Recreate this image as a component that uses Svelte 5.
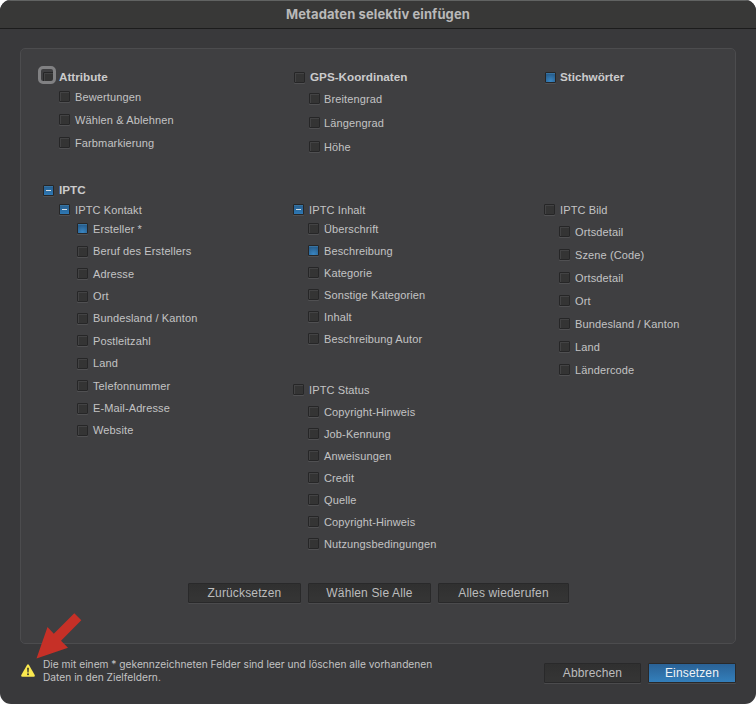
<script>
	/** state: "" | "on" | "mixed" */
	const attribute = { label: "Attribute", state: "", pitch: 23, gap: 0.5, tags: ["Bewertungen", "Wählen & Ablehnen", "Farbmarkierung"] };
	const gps = { label: "GPS-Koordinaten", state: "", pitch: 24, gap: 2, tags: ["Breitengrad", "Längengrad", "Höhe"] };
	const keywords = { label: "Stichwörter", state: "on", pitch: 23, gap: 0, tags: [] };

	const kontakt = {
		label: "IPTC Kontakt", state: "mixed", pitch: 22.4, gap: 0.2,
		tags: ["Ersteller *", "Beruf des Erstellers", "Adresse", "Ort", "Bundesland / Kanton", "Postleitzahl", "Land", "Telefonnummer", "E-Mail-Adresse", "Website"],
	};
	const inhalt = {
		label: "IPTC Inhalt", state: "mixed", pitch: 22, gap: 0,
		tags: ["Überschrift", "Beschreibung", "Kategorie", "Sonstige Kategorien", "Inhalt", "Beschreibung Autor"],
	};
	const status = {
		label: "IPTC Status", state: "", pitch: 22, gap: 3,
		tags: ["Copyright-Hinweis", "Job-Kennung", "Anweisungen", "Credit", "Quelle", "Copyright-Hinweis", "Nutzungsbedingungen"],
	};
	const bild = {
		label: "IPTC Bild", state: "", pitch: 23, gap: 2.5,
		tags: ["Ortsdetail", "Szene (Code)", "Ortsdetail", "Ort", "Bundesland / Kanton", "Land", "Ländercode"],
	};

	let selected = $state(["Ersteller *", "Beschreibung"]);

	function toggle(tag) {
		selected = selected.includes(tag) ? selected.filter(t => t !== tag) : [...selected, tag];
	}
</script>

{#snippet box(state, focus)}
	<span class="box {state}" class:focus></span>
{/snippet}

{#snippet group(g, cls)}
	<div class="group {cls}">
		<div class="head">{@render box(g.state, g.label === "Attribute")}<span class="label">{g.label}</span></div>
		<div class="items" style="--pitch: {g.pitch}px; --gap: {g.gap}px">
			{#each g.tags as tag}
				<button class="item" onclick={() => toggle(tag)}>
					{@render box(selected.includes(tag) ? "on" : "", false)}<span class="label">{tag}</span>
				</button>
			{/each}
		</div>
	</div>
{/snippet}

<main>
	<header>Metadaten selektiv einfügen</header>

	<section class="panel">
		<div class="columns top">
			{@render group(attribute, "main attribute")}
			{@render group(gps, "main gps")}
			{@render group(keywords, "main keywords")}
		</div>
		<div class="head iptc">{@render box("mixed", false)}<span class="label">IPTC</span></div>
		<div class="columns bottom">
			{@render group(kontakt, "kontakt")}
			<div class="stack">
				{@render group(inhalt, "")}
				{@render group(status, "")}
			</div>
			{@render group(bild, "")}
		</div>
		<div class="actions">
			<button class="btn reset">Zurücksetzen</button>
			<button class="btn all">Wählen Sie Alle</button>
			<button class="btn recall">Alles wiederufen</button>
		</div>
	</section>

	<footer>
		<svg class="warn" width="14" height="13" viewBox="0 0 14 13">
			<path d="M6 .9Q7-.4 8 .9L13.7 11Q14.2 12.8 12.7 12.8H1.3Q-.2 12.8.3 11Z" fill="#fbe94f" />
			<path d="M6.1 3.7h1.8l-.3 4.8H6.4z" fill="#3b3a2c" />
			<circle cx="7" cy="10.3" r="1" fill="#3b3a2c" />
		</svg>
		<p>Die mit einem * gekennzeichneten Felder sind leer und löschen alle vorhandenen<br />Daten in den Zielfeldern.</p>
		<button class="btn cancel">Abbrechen</button>
		<button class="btn primary">Einsetzen</button>
	</footer>

	<svg class="arrow" width="46" height="46" viewBox="0 0 46 46">
		<path d="M.5 45.5 11.5 14 17.8 20.7 38.3.3 45.3 7.3 25 27.8 32 34.7Z" fill="#c63027" />
	</svg>
</main>

<style>
	:global(body) {
		background: #fff;
	}
	main {
		position: relative;
		box-sizing: border-box;
		width: 756px;
		height: 704px;
		overflow: hidden;
		border-radius: 11px;
		background: #39393b;
		color: #c3c3c4;
		font-family: "Liberation Sans", Arial, sans-serif;
		font-size: 11px;
	}
	header {
		box-sizing: border-box;
		height: 29px;
		border-top: 1px solid #616362;
		border-bottom: 1px solid #1c1c1c;
		background: #383837;
		color: #b9b9b9;
		font: bold 13px/26px Inter, sans-serif;
		letter-spacing: 0.1px;
		text-align: center;
	}
	.panel {
		box-sizing: border-box;
		width: 716px;
		height: 596px;
		margin: 19px 0 0 20px;
		padding: 20px 0 0 22px;
		border: 1px solid #4c4c4e;
		border-radius: 5px;
		background: #3f3f41;
	}
	.columns {
		display: grid;
		grid-template-columns: 250px 251px 180px;
	}
	.top {
		height: 113px;
	}
	.bottom {
		height: 385px;
		padding-top: 4px;
		box-sizing: border-box;
	}
	.kontakt {
		padding-left: 16px;
	}
	.gps, .keywords {
		padding-left: 1px;
	}
	.stack {
		display: flex;
		flex-direction: column;
		gap: 32px;
	}
	.head, .item {
		display: flex;
		align-items: center;
		gap: 5px;
		white-space: nowrap;
		letter-spacing: 0.12px;
	}
	.head {
		height: 16px;
	}
	.main > .head, .iptc {
		font-weight: bold;
		font-size: 11.7px;
		letter-spacing: 0;
		color: #cbcbcc;
	}
	.keywords > .head {
		gap: 4px;
	}
	.items {
		padding: var(--gap) 0 0 15px;
	}
	.attribute .items {
		padding-left: 16px;
	}
	.gps .item {
		gap: 4px;
	}
	.kontakt .items {
		padding-left: 18px;
	}
	.item {
		height: var(--pitch);
		padding: 0;
		border: 0;
		background: none;
		color: inherit;
		font-family: inherit;
		font-size: inherit;
	}
	.item .label, .bottom .label {
		padding-bottom: 1px;
	}
	.main > .head .label {
		padding-bottom: 2px;
	}
	.iptc .label {
		padding-bottom: 1px;
	}
	.box {
		box-sizing: border-box;
		flex: none;
		width: 11px;
		height: 11px;
		border: 1px solid #262627;
		border-radius: 1px;
		background: #343434;
		box-shadow: inset 1px 1px #434344, 0 1px #505052;
	}
	.item .box, .bottom .head .box {
		margin-bottom: 1px;
	}
	.box.on {
		background: radial-gradient(circle at 50% 90%, #3a86c2, #285f8e 75%);
		box-shadow: inset 0 1px #3773a1, 0 1px #505052;
	}
	.box.mixed {
		display: grid;
		place-items: center;
		background: linear-gradient(#285f8e, #2e78b4);
		box-shadow: inset 0 1px #3773a1, 0 1px #505052;
	}
	.box.mixed::after {
		content: "";
		width: 5px;
		height: 1px;
		background: #d5dee5;
	}
	.box.focus {
		position: relative;
	}
	/* focus ring sits slightly up and left of its box */
	.box.focus::after {
		content: "";
		position: absolute;
		box-sizing: border-box;
		left: -6px;
		top: -7px;
		width: 18px;
		height: 18px;
		border: 3px solid #818183;
		border-radius: 5px;
	}
	.actions {
		display: flex;
		gap: 7px;
		padding-left: 145px;
	}
	.btn {
		box-sizing: border-box;
		height: 20px;
		padding: 0;
		border: 1px solid #29292a;
		border-radius: 1px;
		background: linear-gradient(#303030, #353535);
		box-shadow: 0 1px #4b4b4d;
		color: #bcbcbd;
		font: 12px/18px "Liberation Sans", Arial, sans-serif;
		letter-spacing: 0.15px;
	}
	.reset {
		width: 113px;
	}
	.all {
		width: 123px;
	}
	.recall {
		width: 131px;
	}
	footer {
		display: flex;
		align-items: flex-start;
		padding: 14px 20px 0 21px;
	}
	.warn {
		margin-top: 6px;
	}
	p {
		flex: 1;
		margin: 0 0 0 8px;
		font: 10.2px/13px Inter, sans-serif;
		white-space: nowrap;
	}
	.cancel {
		width: 97px;
		margin: 5px 7px 0 0;
	}
	.primary {
		width: 88px;
		margin-top: 5px;
		background: linear-gradient(#2a6296, #337fbb);
		color: #f0f4f7;
	}
	.arrow {
		position: absolute;
		left: 36px;
		top: 613px;
	}
</style>
